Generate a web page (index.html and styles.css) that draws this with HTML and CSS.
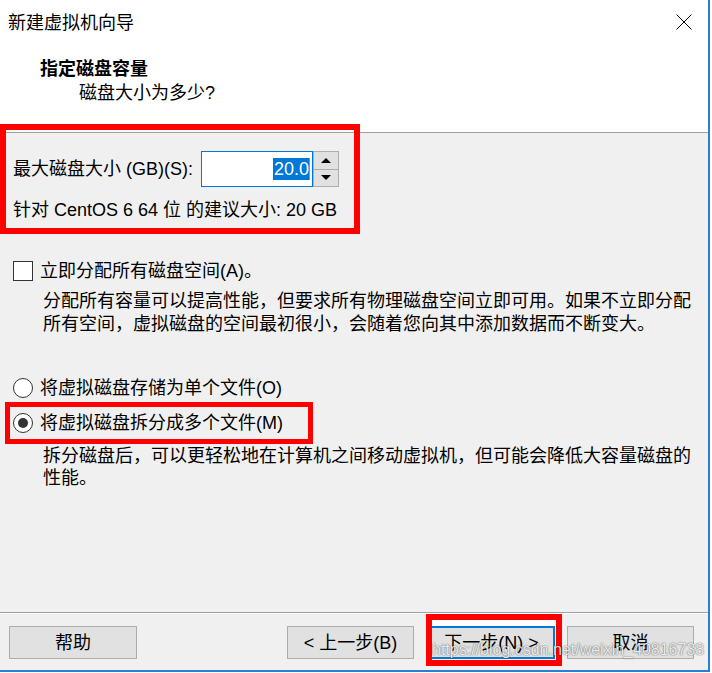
FILE: index.html
```html
<!DOCTYPE html>
<html lang="zh-CN">
<head>
<meta charset="utf-8">
<title>新建虚拟机向导</title>
<link rel="stylesheet" href="styles.css">
</head>
<body>
<div class="window">
  <div class="titlebar">
    <span class="title">新建虚拟机向导</span>
    <svg class="close" width="16" height="16" viewBox="0 0 16 16"><path d="M0.5 0.5 L15.5 15.5 M15.5 0.5 L0.5 15.5" stroke="#000" stroke-width="1" fill="none"/></svg>
  </div>
  <div class="header">
    <div class="heading">指定磁盘容量</div>
    <div class="subheading">磁盘大小为多少?</div>
  </div>
  <div class="content">
    <div class="size-row">
      <span class="label">最大磁盘大小 (GB)(S):</span>
      <div class="spin">
        <div class="spin-input"><span class="sel">20.0</span><span class="caret"></span></div>
        <div class="spin-btns">
          <div class="spin-btn"><span class="tri-up"></span></div>
          <div class="spin-btn"><span class="tri-down"></span></div>
        </div>
      </div>
    </div>
    <div class="recommend">针对 CentOS 6 64 位 的建议大小: 20 GB</div>

    <div class="option check-row"><span class="checkbox"></span><span>立即分配所有磁盘空间(A)。</span></div>
    <div class="desc desc1">分配所有容量可以提高性能，但要求所有物理磁盘空间立即可用。如果不立即分配<br>所有空间，虚拟磁盘的空间最初很小，会随着您向其中添加数据而不断变大。</div>

    <div class="option radio-row r1"><span class="radio"></span><span>将虚拟磁盘存储为单个文件(O)</span></div>
    <div class="option radio-row r2"><span class="radio on"></span><span>将虚拟磁盘拆分成多个文件(M)</span></div>
    <div class="desc desc2">拆分磁盘后，可以更轻松地在计算机之间移动虚拟机，但可能会降低大容量磁盘的<br>性能。</div>
  </div>
  <div class="footer">
    <button class="btn help">帮助</button>
    <div class="spacer"></div>
    <button class="btn back">&lt; 上一步(B)</button>
    <button class="btn next">下一步(N) &gt;</button>
    <button class="btn cancel">取消</button>
  </div>

  <div class="mark mark-size"></div>
  <div class="mark mark-radio"></div>
  <div class="mark mark-next"><span class="mark-fill"></span></div>
  <div class="watermark">https://blog.csdn.net/weixin_40816738</div>
</div>
</body>
</html>
```
FILE: styles.css
```css
* { box-sizing: border-box; }
html, body { margin: 0; padding: 0; background: #fff; }
body {
  width: 712px;
  height: 673px;
  overflow: hidden;
  font-family: "Liberation Sans", "Noto Sans CJK SC", sans-serif;
  font-size: 18px;
  color: #000;
}
.window {
  position: relative;
  width: 710px;
  height: 672px;
  background: #f0f0f0;
  border-right: 2px solid #2a7fd5;
  border-bottom: 2px solid #2a7fd5;
  display: flex;
  flex-direction: column;
}
.titlebar {
  height: 42px;
  background: #fff;
  display: flex;
  align-items: center;
  padding-left: 8px;
  padding-right: 16px;
}
.title {
  font-family: "Noto Sans CJK SC", sans-serif;
  font-size: 18px;
  line-height: 24px;
  flex: 1;
}
.close { display: block; margin-top: 1px; }
.header {
  background: #fff;
  height: 91px;
  border-bottom: 1px solid #a0a0a0;
  padding-top: 13px;
}
.heading {
  font-family: "Noto Sans CJK SC", sans-serif;
  font-weight: 700;
  font-size: 18px;
  line-height: 24px;
  padding-left: 40px;
}
.subheading {
  line-height: 24px;
  margin-top: 2px;
  padding-left: 79px;
}
.content {
  flex: 1;
  padding-left: 13px;
}
.size-row {
  margin-top: 18px;
  height: 36px;
  display: flex;
  align-items: center;
}
.label { line-height: 24px; width: 188px; }
.spin { display: flex; height: 36px; }
.spin-input {
  width: 112px;
  height: 36px;
  background: #fff;
  border: 1px solid #0078d7;
  display: flex;
  justify-content: flex-end;
  align-items: center;
  padding-right: 2px;
}
.sel {
  background: #0078d7;
  color: #fff;
  line-height: 22px;
  padding: 0 0 0 1px;
}
.caret { width: 1px; height: 22px; background: #f07820; }
.spin-btns { display: flex; flex-direction: column; width: 26px; height: 36px; }
.spin-btn {
  flex: 1;
  background: #e1e1e1;
  border: 1px solid #adadad;
  display: flex;
  align-items: center;
  justify-content: center;
}
.spin-btn + .spin-btn { border-top: none; }
.tri-up, .tri-down { width: 0; height: 0; border-left: 5px solid transparent; border-right: 5px solid transparent; }
.tri-up { border-bottom: 5px solid #000; }
.tri-down { border-top: 5px solid #000; }
.recommend { margin-top: 11px; line-height: 24px; }
.option { display: flex; align-items: center; height: 24px; line-height: 24px; }
.check-row { margin-top: 37px; }
.checkbox {
  width: 20px; height: 20px;
  background: #fff;
  border: 1px solid #333;
  margin-right: 7px;
}
.radio {
  width: 20px; height: 20px;
  border-radius: 50%;
  background: #fff;
  border: 1px solid #333;
  margin-right: 7px;
  display: flex;
  align-items: center;
  justify-content: center;
}
.radio.on::after {
  content: "";
  width: 10px; height: 10px;
  border-radius: 50%;
  background: #333;
}
.desc { padding-left: 30px; }
.desc1 { margin-top: 7px; line-height: 23px; }
.r1 { margin-top: 40px; }
.r2 { margin-top: 11px; }
.desc2 { margin-top: 10px; line-height: 22px; }
.footer {
  height: 58px;
  border-top: 1px solid #a0a0a0;
  box-shadow: inset 0 1px 0 #fff;
  display: flex;
  align-items: flex-start;
  padding: 13px 14px 0 9px;
}
.spacer { flex: 1; }
.btn {
  font-family: "Liberation Sans", "Noto Sans CJK SC", sans-serif;
  font-size: 18px;
  color: #000;
  height: 33px;
  width: 127px;
  background: #e1e1e1;
  border: 1px solid #adadad;
  padding: 0;
  line-height: 24px;
}
.help { width: 128px; }
.next { border: 2px solid #0078d7; margin-left: 14px; }
.cancel { margin-left: 12px; }
.mark {
  position: absolute;
  border: 6px solid #ff0000;
  pointer-events: none;
}
.mark-size { left: 0; top: 124px; width: 360px; height: 110px; }
.mark-radio { left: 5px; top: 402px; width: 308px; height: 42px; border-width: 5px; }
.mark-next { left: 426px; top: 614px; width: 136px; height: 52px; }
.mark-fill { display: block; height: 6px; background: #fff; }
.watermark {
  position: absolute;
  left: 432px;
  top: 641px;
  font-family: "Liberation Sans", sans-serif;
  font-size: 16px;
  line-height: 18px;
  color: rgba(255,255,255,0.9);
  text-shadow: 0 0 1px rgba(0,0,0,0.6), 0 0 2px rgba(0,0,0,0.3);
  white-space: nowrap;
}
```
